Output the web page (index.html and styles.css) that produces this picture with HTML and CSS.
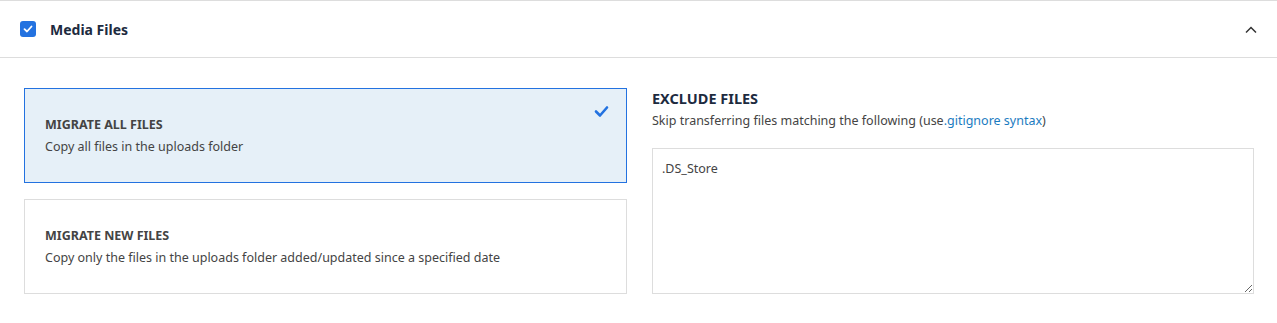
FILE: index.html
```html
<!DOCTYPE html>
<html lang="en">
<head>
    <meta charset="UTF-8">
    <meta name="viewport" content="width=device-width, initial-scale=1.0">
    <title>Media Files</title>
    <link rel="stylesheet" href="styles.css">
</head>
<body>
    <div class="panel">
        <div class="panel-header">
            <span class="checkbox">
                <svg width="10" height="10" viewBox="0 0 10 10"><path d="M1.5 5.2 L4 7.5 L8.5 2.5" fill="none" stroke="#fff" stroke-width="1.8" stroke-linecap="round" stroke-linejoin="round"/></svg>
            </span>
            <h2 class="panel-title">Media Files</h2>
            <svg class="chevron" width="12" height="8" viewBox="0 0 12 8"><path d="M1 6.5 L6 1.5 L11 6.5" fill="none" stroke="#333" stroke-width="1.5"/></svg>
        </div>

        <div class="panel-body">
            <div class="options">
                <div class="option selected">
                    <h3>MIGRATE ALL FILES</h3>
                    <p>Copy all files in the uploads folder</p>
                    <svg class="option-check" width="15" height="13" viewBox="0 0 15 13"><path d="M2 6.5 L6 10.5 L13 2.5" fill="none" stroke="#2372e0" stroke-width="2.6" stroke-linecap="round" stroke-linejoin="round"/></svg>
                </div>
                <div class="option">
                    <h3>MIGRATE NEW FILES</h3>
                    <p>Copy only the files in the uploads folder added/updated since a specified date</p>
                </div>
            </div>

            <div class="exclude">
                <h3>EXCLUDE FILES</h3>
                <p>Skip transferring files matching the following (use<a href="#">.gitignore syntax</a>)</p>
                <textarea>.DS_Store</textarea>
            </div>
        </div>
    </div>
</body>
</html>
```

FILE: styles.css
```css
body {
    margin: 0;
    font-family: "Noto Sans", sans-serif;
    color: #444;
    background: #fff;
}
.panel {
    border-top: 1px solid #ddd;
}
.panel-header {
    height: 56px;
    padding: 0 20px 0 20px;
    display: flex;
    align-items: center;
    border-bottom: 1px solid #ddd;
}
.checkbox {
    width: 16px;
    height: 16px;
    border-radius: 3px;
    background: #2372e0;
    display: flex;
    align-items: center;
    justify-content: center;
}
.panel-title {
    margin: 0 0 0 14px;
    font-size: 14px;
    font-weight: 700;
    color: #1d2b3f;
    flex: 1;
}
.chevron {
    margin-top: 1px;
}
.panel-body {
    padding: 30px 23px 28px 24px;
    display: grid;
    grid-template-columns: 603px 602px;
    column-gap: 25px;
    align-items: start;
}
.options {
    display: flex;
    flex-direction: column;
    gap: 16px;
}
.option {
    position: relative;
    height: 93px;
    padding: 0 20px;
    border: 1px solid #ddd;
    background: #fff;
    display: flex;
    flex-direction: column;
    justify-content: center;
}
.option.selected {
    background: #e6f0f8;
    border-color: #2372e0;
}
.option h3 {
    margin: 0 0 5px;
    font-size: 12.5px;
    line-height: 17px;
    font-weight: 700;
    color: #444;
}
.option p {
    margin: 0;
    font-size: 12.5px;
    line-height: 17px;
    color: #444;
}
.option-check {
    position: absolute;
    top: 16px;
    right: 17px;
}
.exclude h3 {
    margin: 0;
    font-size: 14.5px;
    line-height: 20px;
    color: #1d2b3f;
}
.exclude p {
    margin: 4px 0 18px;
    font-size: 12.5px;
    line-height: 18px;
    color: #444;
}
.exclude a {
    color: #1b7bbf;
    text-decoration: none;
}
.exclude textarea {
    display: block;
    width: 100%;
    height: 146px;
    box-sizing: border-box;
    padding: 11px 9px;
    border: 1px solid #ddd;
    font-family: "Noto Sans", sans-serif;
    font-size: 12.5px;
    color: #444;
    resize: vertical;
}
```
